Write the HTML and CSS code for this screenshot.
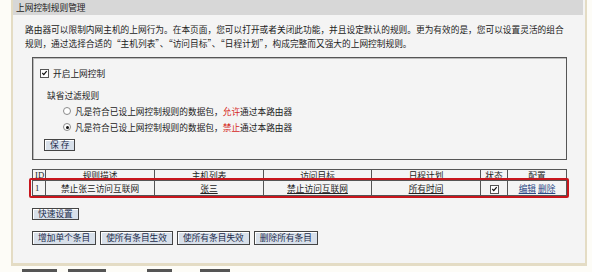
FILE: index.html
```html
<!DOCTYPE html>
<html lang="zh-CN">
<head>
<meta charset="utf-8">
<title>上网控制规则管理</title>
<link rel="stylesheet" href="styles.css">
</head>
<body>
<div class="frame">
  <div class="title">上网控制规则管理</div>
  <div class="content">
    <p class="intro">路由器可以限制内网主机的上网行为。在本页面，您可以打开或者关闭此功能，并且设定默认的规则。更为有效的是，您可以设置灵活的组合<br>规则，通过选择合适的“主机列表”、“访问目标”、“日程计划”，构成完整而又强大的上网控制规则。</p>
    <div class="box">
      <div class="enable"><span class="cb"><svg viewBox="0 0 8 8" width="8" height="8"><path d="M1.5 4 L3.2 5.8 L6.5 1.8" fill="none" stroke="#111" stroke-width="1.4"/></svg></span><span>开启上网控制</span></div>
      <div class="label">缺省过滤规则</div>
      <div class="radio-row"><span class="radio"></span><span>凡是符合已设上网控制规则的数据包，<span class="red">允许</span>通过本路由器</span></div>
      <div class="radio-row"><span class="radio on"></span><span>凡是符合已设上网控制规则的数据包，<span class="red">禁止</span>通过本路由器</span></div>
      <div class="save-row"><button class="btn">保 存</button></div>
    </div>
    <div class="table-wrap">
      <table class="rules">
        <colgroup>
          <col class="c-id"><col class="c-desc"><col class="c-host"><col class="c-target"><col class="c-sched"><col class="c-state"><col class="c-conf">
        </colgroup>
        <thead>
          <tr><th class="id">ID</th><th>规则描述</th><th>主机列表</th><th>访问目标</th><th>日程计划</th><th>状态</th><th>配置</th></tr>
        </thead>
        <tbody>
          <tr><td class="id">1</td><td>禁止张三访问互联网</td><td><a href="#">张三</a></td><td><a href="#">禁止访问互联网</a></td><td><a href="#">所有时间</a></td><td><span class="cb"><svg viewBox="0 0 8 8" width="8" height="8"><path d="M1.5 4 L3.2 5.8 L6.5 1.8" fill="none" stroke="#111" stroke-width="1.4"/></svg></span></td><td><a href="#" class="blue">编辑</a> <a href="#" class="blue">删除</a></td></tr>
        </tbody>
      </table>
      <div class="highlight"></div>
    </div>
    <div class="quick"><button class="btn">快速设置</button></div>
    <div class="actions">
      <button class="btn">增加单个条目</button>
      <button class="btn">使所有条目生效</button>
      <button class="btn">使所有条目失效</button>
      <button class="btn">删除所有条目</button>
    </div>
  </div>
</div>
<div class="below"><span class="bar b1"></span><span class="bar b2"></span><span class="bar b3"></span><span class="bar b4"></span></div>
</body>
</html>
```
FILE: styles.css
```css
* { box-sizing: border-box; }
html, body { margin: 0; padding: 0; }
body {
  background: #fdfcf7;
  font-family: "Noto Sans CJK SC", "Noto Sans", sans-serif;
  font-size: 8.7px;
  color: #222;
  width: 592px;
  height: 272px;
  overflow: hidden;
}
.frame {
  margin-left: 11px;
  width: 576px;
  height: 266px;
  border-left: 2px solid #e4dcc4;
  border-right: 2px solid #e4dcc4;
  border-bottom: 3px solid #e4dcc4;
  background: #f4f4f4;
}
.title {
  height: 15px;
  line-height: 15px;
  background: #d7d7d7;
  padding-left: 3px;
  color: #222;
  margin-right: 2px;
}
.intro {
  margin: 8px 0 0 0;
  padding-left: 12px;
  line-height: 14px;
  color: #222;
  white-space: nowrap;
}
.box {
  margin: 6px 0 0 19px;
  width: 535px;
  border: 1px solid #555;
  box-shadow: inset 1px 1px 0 #bbb;
  padding: 8px 0 8px 0;
}
.enable {
  display: flex;
  align-items: center;
  height: 14px;
  padding-left: 7px;
  gap: 4px;
}
.cb {
  display: inline-flex;
  align-items: center;
  justify-content: center;
  width: 9px;
  height: 9px;
  background: #fff;
  border: 1px solid #555;
}
.label {
  margin-top: 9px;
  height: 14px;
  line-height: 14px;
  padding-left: 14px;
}
.radio-row {
  display: flex;
  align-items: center;
  height: 16px;
  padding-left: 30px;
  gap: 4px;
}
.radio-row:first-of-type { margin-top: 2px; }
.radio {
  display: inline-block;
  width: 8px;
  height: 8px;
  border-radius: 50%;
  border: 1px solid #8a8a8a;
  background: #fff;
  position: relative;
}
.radio.on::after {
  content: "";
  position: absolute;
  left: 1.5px;
  top: 1.5px;
  width: 3px;
  height: 3px;
  border-radius: 50%;
  background: #111;
}
.red { color: #d4281e; }
.save-row {
  margin-top: 4px;
  padding-left: 11px;
  height: 12px;
  display: flex;
}
.btn {
  font-family: "Noto Sans CJK SC", "Noto Sans", sans-serif;
  font-size: 8.7px;
  color: #1b2b4a;
  background: #d8e0ea;
  border: 1px solid #444;
  box-shadow: inset 1px 1px 0 #fff;
  padding: 0 5px;
  height: 12px;
  line-height: 10px;
  margin: 0;
  white-space: nowrap;
}
.table-wrap {
  position: relative;
  margin: 9px 0 0 19px;
  width: 534px;
}
.rules {
  width: 534px;
  table-layout: fixed;
  border-collapse: collapse;
  border: 1px solid #555;
}
.c-id { width: 13px; }
.c-desc { width: 109px; }
.c-host { width: 109px; }
.c-target { width: 108px; }
.c-sched { width: 109px; }
.c-state { width: 27px; }
.c-conf { width: 59px; }
.rules th, .rules td {
  border: 1px solid #555;
  padding: 0;
  text-align: center;
  font-weight: normal;
  white-space: nowrap;
  overflow: hidden;
}
.rules th { height: 11px; line-height: 9px; color: #222; }
.rules td { height: 15px; line-height: 13px; }
.rules .id { text-align: left; padding-left: 2px; font-family: "Liberation Serif", serif; }
.rules td .cb { vertical-align: middle; }
.rules a { color: #222; text-decoration: underline; }
.rules a.blue { color: #2c4a86; }
.highlight {
  position: absolute;
  left: -3px;
  top: 9px;
  width: 540px;
  height: 20px;
  border: 2px solid #c8161d;
  border-radius: 2px;
}
.quick {
  margin: 12px 0 0 19px;
  display: flex;
}
.actions {
  margin: 11px 0 0 19px;
  display: flex;
  gap: 4px;
}
.actions .btn { height: 14px; line-height: 12px; }
.below {
  display: flex;
  margin-top: 3px;
  height: 3px;
}
.bar { display: block; height: 3px; background: #555; }
.b1 { margin-left: 22px; width: 35px; }
.b2 { margin-left: 11px; width: 38px; }
.b3 { margin-left: 41px; width: 25px; }
.b4 { margin-left: 28px; width: 30px; }
```
